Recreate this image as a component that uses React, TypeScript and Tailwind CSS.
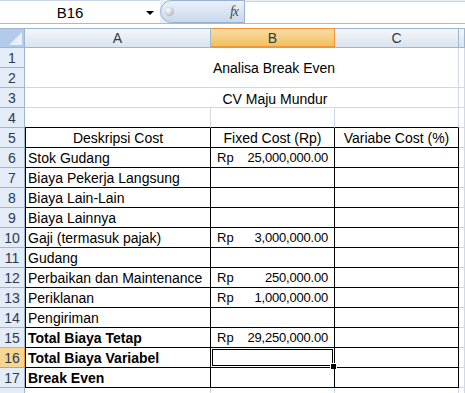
const rows = [
  { n: 6, label: 'Stok Gudang', amount: '25,000,000.00' },
  { n: 7, label: 'Biaya Pekerja Langsung' },
  { n: 8, label: 'Biaya Lain-Lain' },
  { n: 9, label: 'Biaya Lainnya' },
  { n: 10, label: 'Gaji (termasuk pajak)', amount: '3,000,000.00' },
  { n: 11, label: 'Gudang' },
  { n: 12, label: 'Perbaikan dan Maintenance', amount: '250,000.00' },
  { n: 13, label: 'Periklanan', amount: '1,000,000.00' },
  { n: 14, label: 'Pengiriman' },
  { n: 15, label: 'Total Biaya Tetap', amount: '29,250,000.00', bold: true },
  { n: 16, label: 'Total Biaya Variabel', bold: true, selected: true },
  { n: 17, label: 'Break Even', bold: true },
];

const grid = 'border-r border-b border-[#d0d7e5]';
const boxed = 'border-r border-b border-black';

const FormulaBar = () => (
  <div className="flex h-[24px] bg-[#e9eff7] border-b border-[#a7bad3]">
    <div className="relative flex items-center w-[160px] bg-white border-t border-[#c9d6e6]">
      <span className="w-[140px] text-center text-[15px] text-black">B16</span>
      <span className="absolute left-[146px] top-[10px] w-0 h-0 border-l-[4px] border-r-[4px] border-t-[4px] border-l-transparent border-r-transparent border-t-black" />
    </div>
    <div className="flex items-center justify-between w-[85px] rounded-l-full bg-gradient-to-b from-[#eaf1fa] to-[#c8d8ed] border border-[#9ab0cc] pl-[4px] pr-[6px]">
      <span className="w-[9px] h-[9px] rounded-full bg-[radial-gradient(circle_at_35%_35%,#ffffff,#9aa3ad)]" />
      <span className="font-['Liberation_Serif',serif] italic text-[14px] text-[#4a4a4a] tracking-[-1px]">fx</span>
    </div>
    <div className="flex-1 bg-white border-t border-[#c9d6e6] mt-[1px]" />
  </div>
);

const ColHeader = ({ label, w, selected }: any) => (
  <div
    className={`${w} flex items-center justify-center border-r border-t ${
      selected
        ? 'bg-gradient-to-b from-[#f9dba4] to-[#f1c15d] border-b-2 border-[#f29536] text-[#2b3a4f]'
        : 'bg-gradient-to-b from-[#f4f6fa] to-[#dbe3ee] border-b border-[#9eb6ce] text-[#2b3a4f]'
    }`}
  >
    {label}
  </div>
);

const App = () => {
  return (
    <div className="w-[465px] h-[393px] overflow-hidden bg-white font-['Liberation_Sans',sans-serif] text-[14px] text-black leading-none">
      <FormulaBar />
      <div className="h-[4px] bg-white" />

      <div className="flex h-[20px]">
        <div className="w-[25px] border-r border-t border-b border-[#9eb6ce] bg-[#b3cbea] flex items-end justify-end p-[2px]">
          <svg width="13" height="13" viewBox="0 0 13 13">
            <polygon points="13,0 13,13 0,13" fill="#e8eff8" />
          </svg>
        </div>
        <ColHeader label="A" w="w-[186px]" />
        <ColHeader label="B" w="w-[124px]" selected />
        <ColHeader label="C" w="w-[124px]" />
        <ColHeader label="" w="flex-1" />
      </div>

      <div className="flex">
        <div className="w-[25px] flex flex-col">
          {Array.from({ length: 18 }, (_, i) => i + 1).map((n) => (
            <div
              key={n}
              className={`h-[20px] flex items-center justify-center border-r border-b ${
                n === 16
                  ? 'bg-[#f8d591] border-[#f29536] text-[#2b3a4f]'
                  : 'bg-[#e4ecf7] border-[#9eb6ce] text-[#2b3a4f]'
              }`}
            >
              {n < 18 ? n : ''}
            </div>
          ))}
        </div>

        <div className="grid grid-cols-[186px_124px_124px_1fr] auto-rows-[20px] flex-1">
          <div className={`col-span-3 row-span-2 flex items-center justify-center pl-[65px] ${grid}`}>
            Analisa Break Even
          </div>
          <div className={`row-span-2 ${grid}`} />

          <div className={`col-span-3 flex items-center justify-center pl-[67px] pt-[2px] ${grid}`}>
            CV Maju Mundur
          </div>
          <div className={grid} />

          <div className={`${grid} border-b-black`} />
          <div className={`${grid} border-b-black`} />
          <div className={`${grid} border-b-black`} />
          <div className={grid} />

          <div className={`${boxed} border-l flex items-center justify-center`}>Deskripsi Cost</div>
          <div className={`${boxed} flex items-center justify-center`}>Fixed Cost (Rp)</div>
          <div className={`${boxed} flex items-center justify-center`}>Variabe Cost (%)</div>
          <div className={grid} />

          {rows.map((r) => (
            <div key={r.n} className="contents">
              <div className={`${boxed} border-l flex items-center pl-[2px] ${r.bold ? 'font-bold' : ''}`}>
                {r.label}
              </div>
              <div className={`${boxed} relative flex items-center justify-between px-[6px] text-[13px]`}>
                {r.amount && (
                  <>
                    <span>Rp</span>
                    <span className="tracking-[-0.2px]">{r.amount}</span>
                  </>
                )}
                {r.selected && (
                  <div className="absolute -top-[1px] -left-[1px] -right-[1px] -bottom-[1px] border-[3px] border-double border-black">
                    <span className="absolute -right-[5px] -bottom-[5px] w-[7px] h-[7px] bg-black border border-white" />
                  </div>
                )}
              </div>
              <div className={boxed} />
              <div className={grid} />
            </div>
          ))}

          <div className={grid} />
          <div className={grid} />
          <div className={grid} />
          <div className={grid} />
        </div>
      </div>
    </div>
  );
};

export default App;
